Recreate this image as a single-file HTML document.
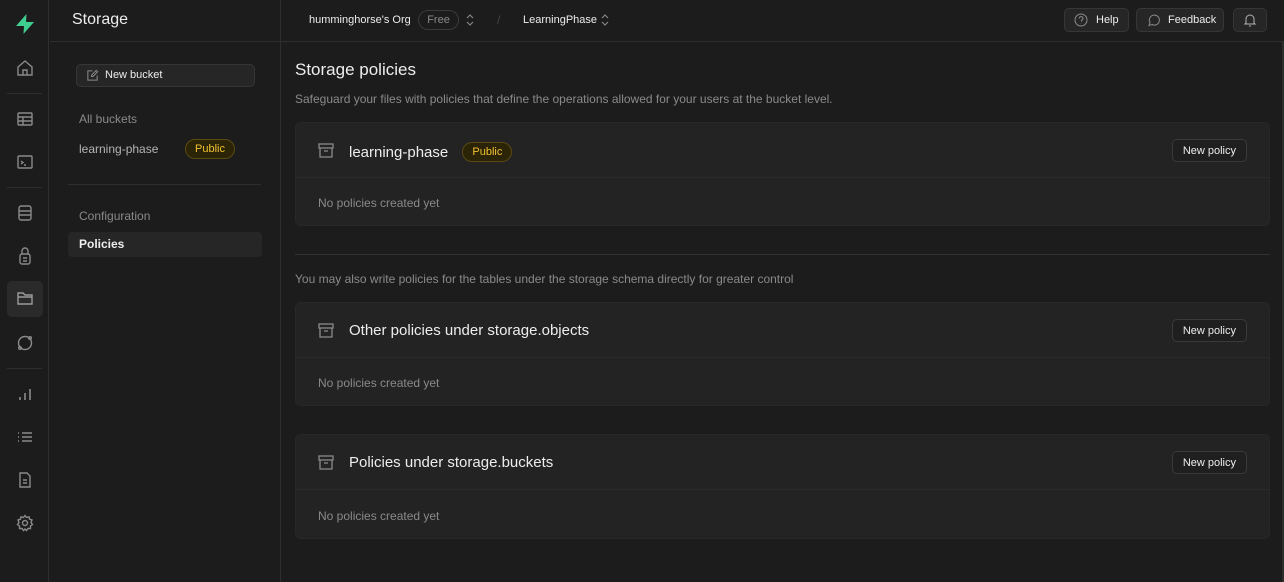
<!DOCTYPE html>
<html><head><style>
*{box-sizing:border-box;margin:0;padding:0}
body{width:1284px;height:582px;background:#1c1c1c;font-family:"Liberation Sans",sans-serif;color:#ededed;position:relative;overflow:hidden}
.abs{position:absolute}
.ib{position:absolute;left:0;top:0;width:49px;height:582px;border-right:1px solid #2e2e2e;background:#1c1c1c}
.ic{position:absolute;left:15px;width:20px;height:20px}
.sb{position:absolute;left:50px;top:0;width:231px;height:582px;border-right:1px solid #2e2e2e}
.hdr{position:absolute;left:281px;top:0;right:0;height:42px;border-bottom:1px solid #2e2e2e}
.card{position:absolute;left:295px;width:975px;background:#232323;border:1px solid #282828;border-radius:6px}
.card .top{height:55px;border-bottom:1px solid #2a2a2a;position:relative}
.card .t{position:absolute;left:53px;top:19px;font-size:15px;color:#ededed}
.card .box{position:absolute;left:22px;top:20px}
.card .np{position:absolute;right:22px;top:16px;height:23px;padding:0 10px;border:1px solid #3a3a3a;border-radius:5px;font-size:11px;line-height:22px;color:#ededed;background:#1f1f1f}
.card .e{position:absolute;left:22px;font-size:12px;color:#8a8a8a}
.pub{display:inline-block;border:1px solid #5a4a10;background:#2b2406;color:#f1c232;border-radius:11px;font-size:11px;padding:0 9px;height:20px;line-height:18px}
.btn{position:absolute;top:8px;height:24px;border:1px solid #363636;border-radius:5px;background:#262626;font-size:11px;line-height:22px;color:#ededed}
</style></head><body>
<div class="ib">
<svg class="abs" style="left:13px;top:12px" width="24" height="24" viewBox="0 0 24 24"><path d="M13.5 2 L3 14 H11 L10.5 22 L21 10 H13 Z" fill="#3ecf8e"/></svg>
<svg class="ic" style="top:58px" viewBox="0 0 20 20" fill="none" stroke="#8a8a8a" stroke-width="1.4"><path d="M3 9 L10 3 L17 9 V17 H3 Z M8 17 V12 H12 V17"/></svg>
<div class="abs" style="left:7px;top:93px;width:35px;border-top:1px solid #2e2e2e"></div>
<svg class="ic" style="top:109px" viewBox="0 0 20 20" fill="none" stroke="#8a8a8a" stroke-width="1.4"><rect x="3" y="4" width="14" height="12" rx="1"/><path d="M3 8H17M3 12H17M8 8V16"/></svg>
<svg class="ic" style="top:152px" viewBox="0 0 20 20" fill="none" stroke="#8a8a8a" stroke-width="1.4"><rect x="3" y="4" width="14" height="12" rx="1"/><path d="M6 9L8 10.5L6 12M9 13H11"/></svg>
<div class="abs" style="left:7px;top:187px;width:35px;border-top:1px solid #2e2e2e"></div>
<svg class="ic" style="top:203px" viewBox="0 0 20 20" fill="none" stroke="#8a8a8a" stroke-width="1.4"><rect x="4" y="3" width="12" height="14" rx="2"/><path d="M4 8H16M4 12H16"/></svg>
<svg class="ic" style="top:246px" viewBox="0 0 20 20" fill="none" stroke="#8a8a8a" stroke-width="1.4"><rect x="5" y="8" width="10" height="10" rx="2"/><path d="M7 8V5a3 3 0 0 1 6 0V8M8 12H12M8 15H12"/></svg>
<div class="abs" style="left:7px;top:281px;width:36px;height:36px;background:#2a2a2a;border-radius:5px"></div>
<svg class="ic" style="top:288px" viewBox="0 0 20 20" fill="none" stroke="#9a9a9a" stroke-width="1.4"><path d="M3 5h5l2 2h7v9H3Z M3 9H17"/></svg>
<svg class="ic" style="top:333px" viewBox="0 0 20 20" fill="none" stroke="#8a8a8a" stroke-width="1.4"><circle cx="10" cy="10" r="6.5"/><circle cx="15" cy="5" r="1.3"/><circle cx="5" cy="15" r="1.3"/></svg>
<div class="abs" style="left:7px;top:368px;width:35px;border-top:1px solid #2e2e2e"></div>
<svg class="ic" style="top:384px" viewBox="0 0 20 20" fill="none" stroke="#8a8a8a" stroke-width="1.6"><path d="M5 16V13M10 16V9M15 16V5"/></svg>
<svg class="ic" style="top:427px" viewBox="0 0 20 20" fill="none" stroke="#8a8a8a" stroke-width="1.4"><path d="M3 6H4M3 10H4M3 14H4M7 6H17M7 10H17M7 14H17"/></svg>
<svg class="ic" style="top:470px" viewBox="0 0 20 20" fill="none" stroke="#8a8a8a" stroke-width="1.4"><path d="M5 3H12L15 6V17H5Z M8 10H12M8 13H12"/></svg>
<svg class="ic" style="top:513px" viewBox="0 0 20 20" fill="none" stroke="#8a8a8a" stroke-width="1.4"><circle cx="10" cy="10" r="2.5"/><path d="M10 2.5L11.5 4.5L14 3.8L14.5 6.2L17 7L16 9.5L17.5 11.5L15.5 13L15.5 15.5L13 15.5L11.5 17.5L10 16L8.5 17.5L7 15.5L4.5 15.5L4.5 13L2.5 11.5L4 9.5L3 7L5.5 6.2L6 3.8L8.5 4.5Z"/></svg>
</div>
<div class="sb">
<div class="abs" style="left:22px;top:11px;font-size:16px">Storage</div>
<div class="abs" style="left:0;right:0;top:41px;border-top:1px solid #2e2e2e"></div>
<div class="abs" style="left:26px;top:64px;width:179px;height:23px;border:1px solid #363636;border-radius:5px;background:#262626;font-size:11px;line-height:21px;padding-left:28px">New bucket
<svg class="abs" style="left:9px;top:4px" width="13" height="13" viewBox="0 0 14 14" fill="none" stroke="#8a8a8a" stroke-width="1.1"><path d="M7 2H2V12H12V7M11 1.5L12.5 3L7.5 8H6V6.5Z"/></svg></div>
<div class="abs" style="left:29px;top:112px;font-size:12px;color:#8a8a8a">All buckets</div>
<div class="abs" style="left:29px;top:142px;font-size:12px;color:#b4b4b4">learning-phase</div>
<div class="abs" style="left:135px;top:139px"><span class="pub">Public</span></div>
<div class="abs" style="left:18px;right:19px;top:184px;border-top:1px solid #2e2e2e"></div>
<div class="abs" style="left:29px;top:209px;font-size:12px;color:#8a8a8a">Configuration</div>
<div class="abs" style="left:18px;top:232px;width:194px;height:25px;background:#262626;border-radius:4px"></div>
<div class="abs" style="left:29px;top:237px;font-size:12px;font-weight:bold">Policies</div>
</div>
<div class="hdr">
<div class="abs" style="left:28px;top:14px;font-size:11px">humminghorse's Org</div>
<div class="abs" style="left:137px;top:10px;height:20px;width:41px;border:1px solid #3a3a3a;border-radius:10px;font-size:11px;line-height:18px;text-align:center;color:#8a8a8a">Free</div>
<svg class="abs" style="left:185px;top:13px" width="8" height="14" viewBox="0 0 8 14" fill="none" stroke="#8a8a8a" stroke-width="1.1"><path d="M1 5L4 2L7 5M1 9L4 12L7 9"/></svg>
<div class="abs" style="left:216px;top:13px;font-size:12px;color:#444">/</div>
<div class="abs" style="left:242px;top:14px;font-size:11px">LearningPhase</div>
<svg class="abs" style="left:320px;top:13px" width="8" height="14" viewBox="0 0 8 14" fill="none" stroke="#8a8a8a" stroke-width="1.1"><path d="M1 5L4 2L7 5M1 9L4 12L7 9"/></svg>
<div class="btn" style="left:783px;width:65px;padding-left:31px">Help
<svg class="abs" style="left:9px;top:4px" width="14" height="14" viewBox="0 0 14 14" fill="none" stroke="#8a8a8a" stroke-width="1"><circle cx="7" cy="7" r="6"/><path d="M5.3 5.5a1.8 1.8 0 1 1 2.2 1.7V8.5M7 10.3v.2"/></svg></div>
<div class="btn" style="left:855px;width:88px;padding-left:31px">Feedback
<svg class="abs" style="left:10px;top:4px" width="14" height="14" viewBox="0 0 14 14" fill="none" stroke="#8a8a8a" stroke-width="1"><path d="M2 12.5L3 9.5A5 5 0 1 1 5 11.5Z"/></svg></div>
<div class="btn" style="left:952px;width:34px">
<svg class="abs" style="left:9px;top:4px" width="14" height="14" viewBox="0 0 14 14" fill="none" stroke="#b4b4b4" stroke-width="1"><path d="M3 10V6a4 4 0 0 1 8 0V10L12 11H2Z M6 13H8"/></svg></div>
</div>
<div class="abs" style="left:1282px;top:42px;width:2px;height:540px;background:#2e2e2e"></div>
<div class="abs" style="left:295px;top:60px;font-size:17px">Storage policies</div>
<div class="abs" style="left:295px;top:92px;font-size:12px;color:#8a8a8a">Safeguard your files with policies that define the operations allowed for your users at the bucket level.</div>

<div class="card" style="top:122px;height:104px"><div class="top">
<svg class="box" width="16" height="15" viewBox="0 0 16 15" fill="none" stroke="#8a8a8a" stroke-width="1.3"><rect x="1" y="1" width="14" height="4"/><path d="M2 5V14H14V5M6 8H10"/></svg>
<div class="t">learning-phase <span class="pub" style="margin-left:10px;vertical-align:2px">Public</span></div><div class="np">New policy</div></div>
<div class="e" style="top:73px">No policies created yet</div></div>

<div class="abs" style="left:295px;top:254px;width:975px;border-top:1px solid #333"></div>
<div class="abs" style="left:295px;top:272px;font-size:12px;color:#8a8a8a">You may also write policies for the tables under the storage schema directly for greater control</div>

<div class="card" style="top:302px;height:104px"><div class="top">
<svg class="box" width="16" height="15" viewBox="0 0 16 15" fill="none" stroke="#8a8a8a" stroke-width="1.3"><rect x="1" y="1" width="14" height="4"/><path d="M2 5V14H14V5M6 8H10"/></svg>
<div class="t">Other policies under storage.objects</div><div class="np">New policy</div></div>
<div class="e" style="top:73px">No policies created yet</div></div>

<div class="card" style="top:434px;height:105px"><div class="top">
<svg class="box" width="16" height="15" viewBox="0 0 16 15" fill="none" stroke="#8a8a8a" stroke-width="1.3"><rect x="1" y="1" width="14" height="4"/><path d="M2 5V14H14V5M6 8H10"/></svg>
<div class="t">Policies under storage.buckets</div><div class="np">New policy</div></div>
<div class="e" style="top:74px">No policies created yet</div></div>
</body></html>
